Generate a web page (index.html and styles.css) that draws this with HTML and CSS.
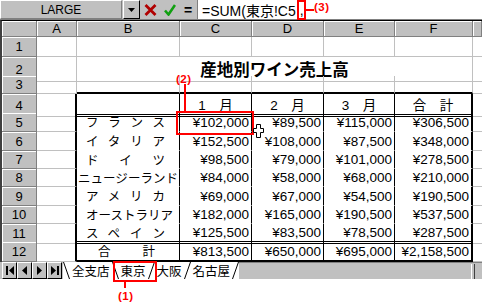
FILE: index.html
```html
<!DOCTYPE html>
<html lang="ja">

<head>
    <meta charset="UTF-8">
    <meta name="viewport" content="width=device-width, initial-scale=1.0">
    <title>産地別ワイン売上高</title>
    <link rel="stylesheet" href="styles.css">
</head>

<body>
    <div class="app">
        <!-- 数式バー -->
        <div class="formula-bar">
            <div class="name-box">LARGE</div>
            <div class="drop-btn">
                <svg width="7" height="4" viewBox="0 0 7 4"><path d="M0 0h7L3.5 4z" fill="#000"/></svg>
            </div>
            <div class="fx-btn">
                <svg width="13" height="12" viewBox="0 0 13 12"><path d="M1.5 1l10 10M11.5 1l-10 10" stroke="#b00000" stroke-width="2.8"/></svg>
            </div>
            <div class="fx-btn">
                <svg width="12" height="12" viewBox="0 0 12 12"><path d="M1 6.5l3.5 4L11 1" stroke="#10a010" stroke-width="2.6" fill="none"/></svg>
            </div>
            <div class="fx-eq">=</div>
            <div class="fx-input">=SUM(東京!C5<span class="comma">,</span></div>
        </div>

        <!-- ワークシート -->
        <div class="sheet">
            <div class="row head">
                <div class="corner"></div>
                <div class="ch">A</div>
                <div class="ch">B</div>
                <div class="ch">C</div>
                <div class="ch">D</div>
                <div class="ch">E</div>
                <div class="ch">F</div>
                <div class="ch"></div>
            </div>
            <div class="row r20">
                <div class="rh">1</div>
                <div class="c"></div><div class="c"></div><div class="c"></div><div class="c"></div><div class="c"></div><div class="c"></div><div class="c g"></div>
            </div>
            <div class="row r19">
                <div class="rh">2</div>
                <div class="c"></div>
                <div class="c title">産地別ワイン売上高</div>
                <div class="c g"></div>
            </div>
            <div class="row r18">
                <div class="rh">3</div>
                <div class="c"></div><div class="c top"></div><div class="c top"></div><div class="c top"></div><div class="c top"></div><div class="c top"></div><div class="c g"></div>
            </div>
            <div class="row r19">
                <div class="rh">4</div>
                <div class="c edge"></div>
                <div class="c t hd"></div>
                <div class="c t hd cen">1　月</div>
                <div class="c t hd cen">2　月</div>
                <div class="c t hd cen">3　月</div>
                <div class="c t end hd cen">合　計</div>
                <div class="c g"></div>
            </div>
            <div class="row r19">
                <div class="rh">5</div>
                <div class="c edge"></div>
                <div class="c t label">フランス</div>
                <div class="c t num">¥102,000</div>
                <div class="c t num">¥89,500</div>
                <div class="c t num">¥115,000</div>
                <div class="c t end num">¥306,500</div>
                <div class="c g"></div>
            </div>
            <div class="row r19">
                <div class="rh">6</div>
                <div class="c edge"></div>
                <div class="c t label">イタリア</div>
                <div class="c t num">¥152,500</div>
                <div class="c t num">¥108,000</div>
                <div class="c t num">¥87,500</div>
                <div class="c t end num">¥348,000</div>
                <div class="c g"></div>
            </div>
            <div class="row r18">
                <div class="rh">7</div>
                <div class="c edge"></div>
                <div class="c t label">ドイツ</div>
                <div class="c t num">¥98,500</div>
                <div class="c t num">¥79,000</div>
                <div class="c t num">¥101,000</div>
                <div class="c t end num">¥278,500</div>
                <div class="c g"></div>
            </div>
            <div class="row r18">
                <div class="rh">8</div>
                <div class="c edge"></div>
                <div class="c t label wide">ニュージーランド</div>
                <div class="c t num">¥84,000</div>
                <div class="c t num">¥58,000</div>
                <div class="c t num">¥68,000</div>
                <div class="c t end num">¥210,000</div>
                <div class="c g"></div>
            </div>
            <div class="row r19">
                <div class="rh">9</div>
                <div class="c edge"></div>
                <div class="c t label">アメリカ</div>
                <div class="c t num">¥69,000</div>
                <div class="c t num">¥67,000</div>
                <div class="c t num">¥54,500</div>
                <div class="c t end num">¥190,500</div>
                <div class="c g"></div>
            </div>
            <div class="row r18">
                <div class="rh">10</div>
                <div class="c edge"></div>
                <div class="c t label">オーストラリア</div>
                <div class="c t num">¥182,000</div>
                <div class="c t num">¥165,000</div>
                <div class="c t num">¥190,500</div>
                <div class="c t end num">¥537,500</div>
                <div class="c g"></div>
            </div>
            <div class="row r18">
                <div class="rh">11</div>
                <div class="c edge"></div>
                <div class="c t sub label">スペイン</div>
                <div class="c t sub num">¥125,500</div>
                <div class="c t sub num">¥83,500</div>
                <div class="c t sub num">¥78,500</div>
                <div class="c t end sub num">¥287,500</div>
                <div class="c g"></div>
            </div>
            <div class="row r20">
                <div class="rh">12</div>
                <div class="c edge"></div>
                <div class="c t tot label total">合計</div>
                <div class="c t tot num">¥813,500</div>
                <div class="c t tot num">¥650,000</div>
                <div class="c t tot num">¥695,000</div>
                <div class="c t end tot num">¥2,158,500</div>
                <div class="c g"></div>
            </div>
        </div>

        <!-- シート見出し -->
        <div class="tab-bar">
            <div class="nav">
                <div class="nav-btn"><svg width="8" height="9" viewBox="0 0 8 9"><path d="M0 0h2v9H0zM8 0v9L3 4.5z" fill="#000"/></svg></div>
                <div class="nav-btn"><svg width="5" height="9" viewBox="0 0 5 9"><path d="M5 0v9L0 4.5z" fill="#000"/></svg></div>
                <div class="nav-btn"><svg width="5" height="9" viewBox="0 0 5 9"><path d="M0 0v9l5-4.5z" fill="#000"/></svg></div>
                <div class="nav-btn"><svg width="8" height="9" viewBox="0 0 8 9"><path d="M0 0v9l5-4.5zM6 0h2v9H6z" fill="#000"/></svg></div>
            </div>
            <div class="tabs">
                <svg class="slant" width="7" height="17" viewBox="0 0 7 17"><path d="M0.5 0l6 17" stroke="#000"/></svg>
                <span class="tab">全支店</span>
                <svg class="slant" width="7" height="17" viewBox="0 0 7 17"><path d="M0.5 0l6 17" stroke="#000"/></svg>
                <span class="tab active">東京</span>
                <svg class="slant" width="7" height="17" viewBox="0 0 7 17"><path d="M6.5 0l-6 17" stroke="#000"/></svg>
                <span class="tab">大阪</span>
                <svg class="slant" width="7" height="17" viewBox="0 0 7 17"><path d="M6.5 0l-6 17" stroke="#000"/></svg>
                <span class="tab">名古屋</span>
                <svg class="slant" width="7" height="17" viewBox="0 0 7 17"><path d="M6.5 0l-6 17" stroke="#000"/></svg>
            </div>
            <div class="hscroll">
                <div class="split"></div>
            </div>
        </div>

        <!-- 注記 -->
        <div class="mark m1"></div>
        <div class="lead l1"></div>
        <div class="note n1">(1)</div>
        <div class="mark m2"></div>
        <div class="lead l2"></div>
        <div class="note n2">(2)</div>
        <div class="mark m3"></div>
        <div class="lead l3"></div>
        <div class="note n3">(3)</div>
        <svg class="pointer" width="11" height="14" viewBox="0 0 11 14"><path d="M3.5 0.5h4v4h3v4h-3v5h-4v-5h-3v-4h3z" fill="#fff" stroke="#000"/></svg>
    </div>
</body>

</html>
```

FILE: styles.css
```css
* {
    box-sizing: border-box;
}

body {
    margin: 0;
    background: #fff;
    color: #000;
    font-family: "Liberation Sans", "Noto Sans CJK JP", sans-serif;
}

.app {
    position: relative;
    width: 482px;
    height: 303px;
    overflow: hidden;
}

/* 数式バー */
.formula-bar {
    display: flex;
    height: 20px;
    background: #c0c0c0;
    border-bottom: 1px solid #808080;
}

.name-box {
    width: 122px;
    display: flex;
    align-items: center;
    justify-content: center;
    font-size: 12px;
    border-top: 1px solid #fff;
    border-left: 1px solid #fff;
    border-right: 1px solid #808080;
    border-bottom: 1px solid #808080;
}

.drop-btn {
    width: 17px;
    margin-left: 1px;
    display: flex;
    align-items: center;
    justify-content: center;
    border-top: 1px solid #fff;
    border-left: 1px solid #fff;
    border-right: 1px solid #000;
    border-bottom: 1px solid #000;
}

.fx-btn {
    width: 20px;
    display: flex;
    align-items: center;
    justify-content: center;
}

.fx-eq {
    width: 16px;
    display: flex;
    align-items: center;
    justify-content: center;
    font-size: 14px;
    font-weight: bold;
}

.fx-input {
    flex: 1;
    margin-left: 1px;
    padding-left: 4px;
    display: flex;
    align-items: center;
    background: #fff;
    border-left: 1px solid #808080;
    font-size: 14px;
    white-space: nowrap;
}

.fx-input .comma {
    margin-left: 4px;
}

/* ワークシート */
.sheet {
    border-top: 1px solid #000;
    border-left: 2px solid #404040;
}

.row {
    display: grid;
    grid-template-columns: 35px 40px 103px 72px 72px 71px 78px 1fr;
}

.head {
    height: 16px;
}

.r18 {
    height: 18px;
}

.r19 {
    height: 19px;
}

.r20 {
    height: 20px;
}

.corner,
.ch,
.rh {
    display: flex;
    align-items: center;
    justify-content: center;
    background: #c0c0c0;
    border-right: 1px solid #808080;
    border-bottom: 1px solid #808080;
    box-shadow: inset 1px 1px #fff;
    font-size: 13px;
}

.c {
    display: flex;
    align-items: center;
    border-right: 1px solid #c0c0c0;
    border-bottom: 1px solid #c0c0c0;
    font-size: 13.5px;
    white-space: nowrap;
}

.c.g {
    border-right: 0;
}

.title {
    grid-column: span 5;
    justify-content: center;
    font-family: "Noto Sans CJK JP", sans-serif;
    font-size: 16.5px;
    font-weight: bold;
}

/* 表の罫線 */
.c.edge {
    border-right: 2px solid #000;
}

.c.top {
    border-bottom: 2px solid #000;
}

.c.t {
    border-right: 1px solid #000;
    border-bottom-color: #fff;
}

.c.t.end {
    border-right-width: 2px;
}

.c.hd,
.c.sub {
    border-bottom: 3px double #000;
}

.c.tot {
    border-bottom: 2px solid #000;
}

.cen {
    justify-content: center;
}

.num {
    justify-content: flex-end;
    padding-right: 2px;
}

.label {
    display: block;
    padding: 0 14px 0 9px;
    font-family: "Noto Sans CJK JP", sans-serif;
    font-size: 12.5px;
    line-height: 17px;
    text-align: justify;
    text-align-last: justify;
}

.label.wide {
    padding: 0 1px;
}

.label.total {
    padding: 0 24px 0 21px;
}

/* シート見出し */
.tab-bar {
    display: flex;
    height: 17px;
    background: #c0c0c0;
}

.nav {
    display: flex;
    padding-left: 2px;
}

.nav-btn {
    width: 15px;
    display: flex;
    align-items: center;
    justify-content: center;
    border-top: 1px solid #fff;
    border-left: 1px solid #fff;
    border-right: 1px solid #000;
    border-bottom: 1px solid #000;
}

.tabs {
    display: flex;
    margin-left: 1px;
    background: #fff;
    font-family: "Noto Sans CJK JP", sans-serif;
    font-size: 12.5px;
    line-height: 17px;
}

.tab {
    padding: 0 2px;
}

.hscroll {
    flex: 1;
    position: relative;
    border-top: 1px solid #808080;
}

.split {
    position: absolute;
    right: 7px;
    top: 1px;
    width: 4px;
    height: 15px;
    border-left: 1px solid #fff;
    border-right: 1px solid #404040;
}

/* 注記（赤枠・番号） */
.mark {
    position: absolute;
    border: 2px solid #f00;
}

.lead {
    position: absolute;
    background: #f00;
}

.note {
    position: absolute;
    color: #f00;
    font-size: 11.5px;
    font-weight: bold;
    letter-spacing: 0.5px;
    line-height: 12px;
}

.m1 {
    left: 113px;
    top: 261px;
    width: 44px;
    height: 21px;
}

.l1 {
    left: 124px;
    top: 282px;
    width: 2px;
    height: 6px;
}

.n1 {
    left: 118px;
    top: 290px;
}

.m2 {
    left: 176px;
    top: 111px;
    width: 78px;
    height: 24px;
}

.l2 {
    left: 184px;
    top: 84px;
    width: 2px;
    height: 27px;
}

.n2 {
    left: 176px;
    top: 73px;
}

.m3 {
    left: 297px;
    top: 0;
    width: 9px;
    height: 20px;
}

.l3 {
    left: 306px;
    top: 9px;
    width: 8px;
    height: 2px;
}

.n3 {
    left: 314px;
    top: 1px;
}

.pointer {
    position: absolute;
    left: 253px;
    top: 124px;
}
```
